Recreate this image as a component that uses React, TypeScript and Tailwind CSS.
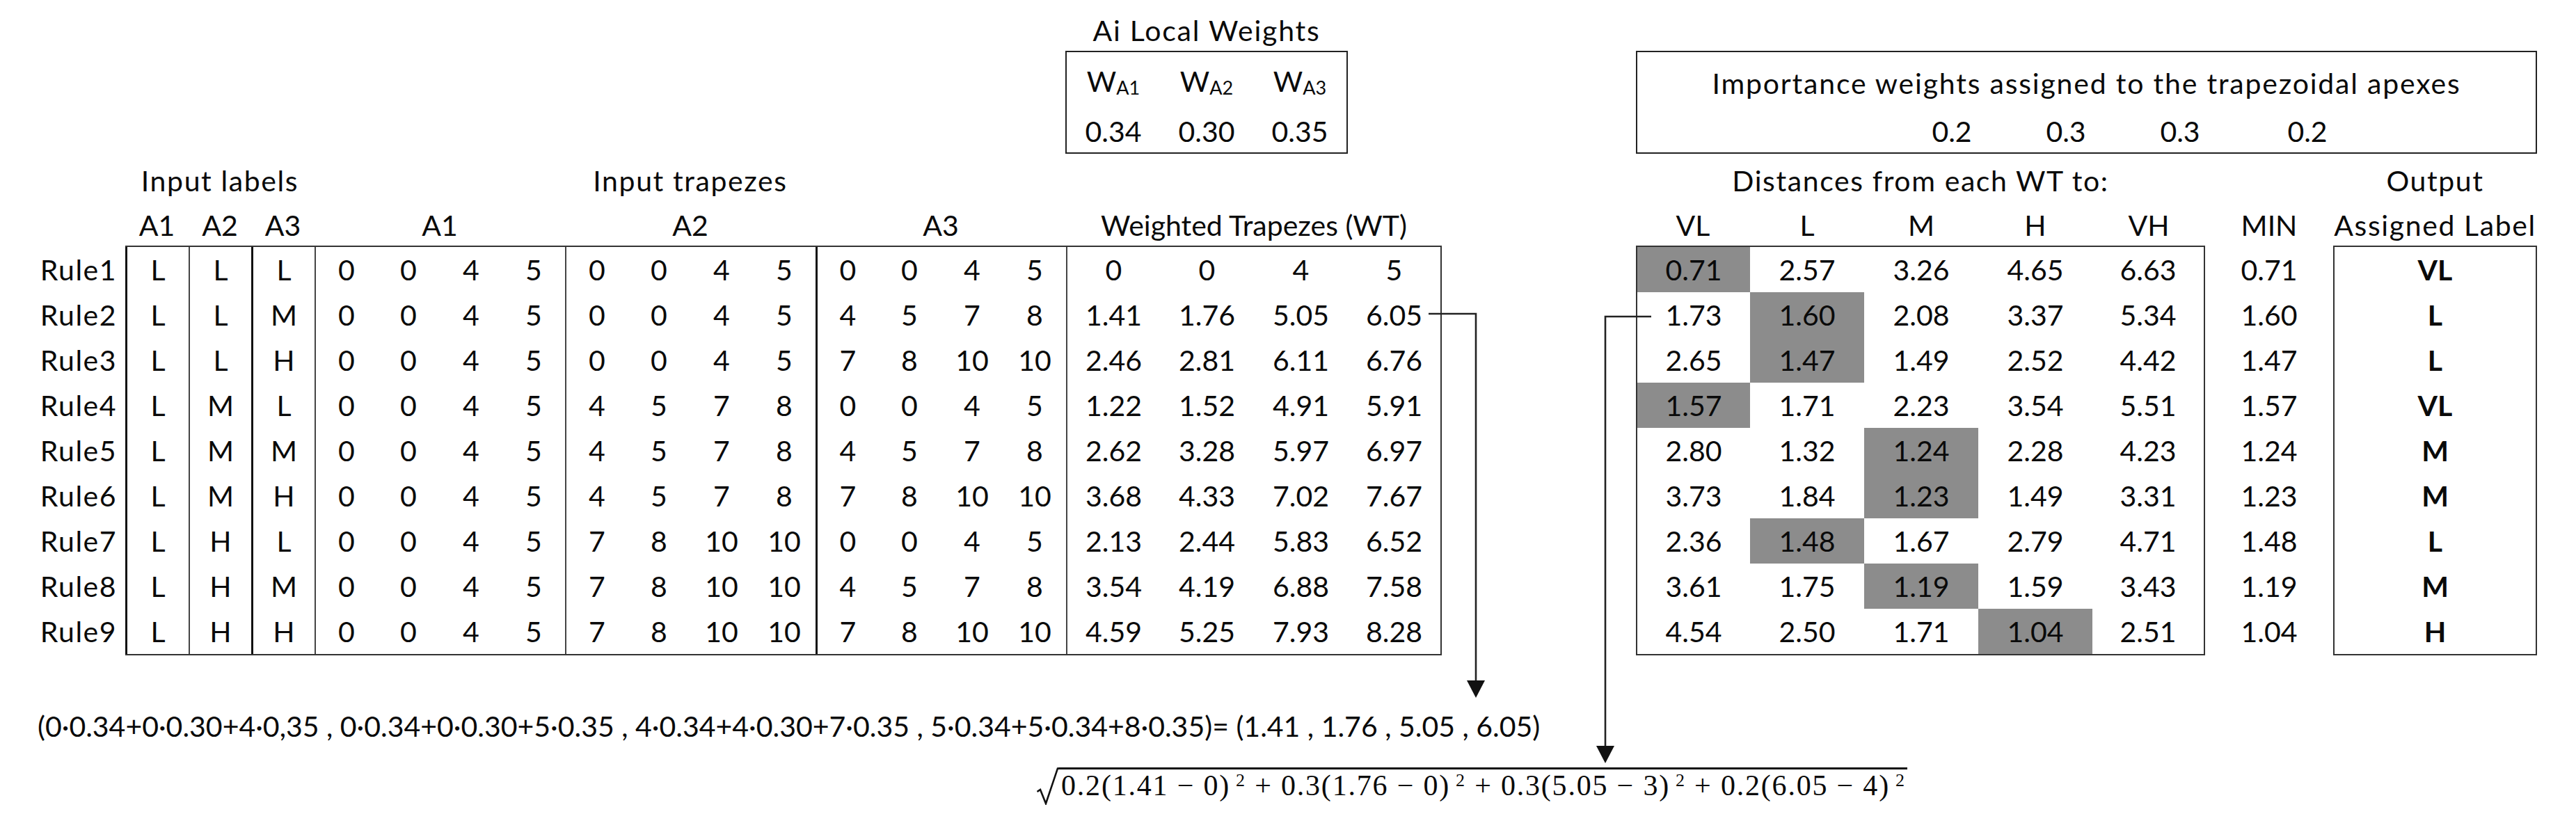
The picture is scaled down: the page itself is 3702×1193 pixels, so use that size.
import React from "react";

const leftRows: { name: string; lab: string[]; t: string[][]; wt: string[] }[] = [
  { name: "Rule1", lab: ["L", "L", "L"], t: [["0", "0", "4", "5"], ["0", "0", "4", "5"], ["0", "0", "4", "5"]], wt: ["0", "0", "4", "5"] },
  { name: "Rule2", lab: ["L", "L", "M"], t: [["0", "0", "4", "5"], ["0", "0", "4", "5"], ["4", "5", "7", "8"]], wt: ["1.41", "1.76", "5.05", "6.05"] },
  { name: "Rule3", lab: ["L", "L", "H"], t: [["0", "0", "4", "5"], ["0", "0", "4", "5"], ["7", "8", "10", "10"]], wt: ["2.46", "2.81", "6.11", "6.76"] },
  { name: "Rule4", lab: ["L", "M", "L"], t: [["0", "0", "4", "5"], ["4", "5", "7", "8"], ["0", "0", "4", "5"]], wt: ["1.22", "1.52", "4.91", "5.91"] },
  { name: "Rule5", lab: ["L", "M", "M"], t: [["0", "0", "4", "5"], ["4", "5", "7", "8"], ["4", "5", "7", "8"]], wt: ["2.62", "3.28", "5.97", "6.97"] },
  { name: "Rule6", lab: ["L", "M", "H"], t: [["0", "0", "4", "5"], ["4", "5", "7", "8"], ["7", "8", "10", "10"]], wt: ["3.68", "4.33", "7.02", "7.67"] },
  { name: "Rule7", lab: ["L", "H", "L"], t: [["0", "0", "4", "5"], ["7", "8", "10", "10"], ["0", "0", "4", "5"]], wt: ["2.13", "2.44", "5.83", "6.52"] },
  { name: "Rule8", lab: ["L", "H", "M"], t: [["0", "0", "4", "5"], ["7", "8", "10", "10"], ["4", "5", "7", "8"]], wt: ["3.54", "4.19", "6.88", "7.58"] },
  { name: "Rule9", lab: ["L", "H", "H"], t: [["0", "0", "4", "5"], ["7", "8", "10", "10"], ["7", "8", "10", "10"]], wt: ["4.59", "5.25", "7.93", "8.28"] },
];

const rightRows: { d: string[]; g: number; min: string; out: string }[] = [
  { d: ["0.71", "2.57", "3.26", "4.65", "6.63"], g: 0, min: "0.71", out: "VL" },
  { d: ["1.73", "1.60", "2.08", "3.37", "5.34"], g: 1, min: "1.60", out: "L" },
  { d: ["2.65", "1.47", "1.49", "2.52", "4.42"], g: 1, min: "1.47", out: "L" },
  { d: ["1.57", "1.71", "2.23", "3.54", "5.51"], g: 0, min: "1.57", out: "VL" },
  { d: ["2.80", "1.32", "1.24", "2.28", "4.23"], g: 2, min: "1.24", out: "M" },
  { d: ["3.73", "1.84", "1.23", "1.49", "3.31"], g: 2, min: "1.23", out: "M" },
  { d: ["2.36", "1.48", "1.67", "2.79", "4.71"], g: 1, min: "1.48", out: "L" },
  { d: ["3.61", "1.75", "1.19", "1.59", "3.43"], g: 2, min: "1.19", out: "M" },
  { d: ["4.54", "2.50", "1.71", "1.04", "2.51"], g: 3, min: "1.04", out: "H" },
];

const labCls = [
  "w-[91px] border-l-[3px] border-[#111]",
  "w-[90px] border-l-2 border-[#444]",
  "w-[91px] border-l-[3px] border-[#111]",
];
const grpFirst = [
  "border-l-2 border-[#444]",
  "border-l-2 border-[#444]",
  "border-l-[3px] border-[#111]",
];
const rCls = [
  "w-[164px] border-l-2 border-[#333]",
  "w-[164px]",
  "w-[164px]",
  "w-[164px]",
  "w-[162px] border-r-2 border-[#333]",
];

const cell = "flex h-full shrink-0 items-center justify-center";

export default function App() {
  return (
    <div className="relative h-[1193px] w-[3702px] overflow-hidden bg-white font-['Lato',sans-serif] text-[41px] leading-[1.2] text-[#0a0a0a]">
      {/* Row A: weight boxes */}
      <div className="flex h-[221px]">
        <div className="w-[1531px] shrink-0" />
        <div className="flex w-[406px] shrink-0 flex-col">
          <div className="h-[73px] pt-[19px] text-center leading-[50px] tracking-[1.8px]">Ai Local Weights</div>
          <div className="flex h-[148px] flex-col border-2 border-[#222]">
            <div className="mt-[17px] flex h-[50px]">
              {["A1", "A2", "A3"].map((s) => (
                <div key={s} className="flex w-[134px] items-center justify-center leading-[50px]">
                  W<sub className="-bottom-[9px] text-[27px]">{s}</sub>
                </div>
              ))}
            </div>
            <div className="mt-[22px] flex h-[50px]">
              {["0.34", "0.30", "0.35"].map((s) => (
                <div key={s} className="flex w-[134px] items-center justify-center leading-[50px]">
                  {s}
                </div>
              ))}
            </div>
          </div>
        </div>
        <div className="w-[414px] shrink-0" />
        <div className="flex w-[1295px] shrink-0 flex-col">
          <div className="h-[73px]" />
          <div className="flex h-[148px] flex-col border-2 border-[#222]">
            <div className="mt-[20px] h-[50px] text-center leading-[50px] tracking-[1.8px]">
              Importance weights assigned to the trapezoidal apexes
            </div>
            <div className="mt-[19px] flex h-[50px] pl-[370px] leading-[50px]">
              <div className="w-[164px] text-center">0.2</div>
              <div className="w-[164px] text-center">0.3</div>
              <div className="w-[164px] text-center">0.3</div>
              <div className="ml-[19px] w-[164px] text-center">0.2</div>
            </div>
          </div>
        </div>
      </div>

      {/* Row B: group headers */}
      <div className="flex h-[78px] pt-[14px] leading-[50px] tracking-[1.6px]">
        <div className="w-[180px] shrink-0" />
        <div className="w-[272px] shrink-0 text-center">Input labels</div>
        <div className="w-[1080px] shrink-0 text-center">Input trapezes</div>
        <div className="w-[540px] shrink-0" />
        <div className="w-[279px] shrink-0" />
        <div className="w-[818px] shrink-0 text-center">Distances from each WT to:</div>
        <div className="w-[184px] shrink-0" />
        <div className="w-[293px] shrink-0 text-center">Output</div>
      </div>

      {/* Row C: column headers */}
      <div className="flex h-[54px] items-center pb-[4px]">
        <div className="w-[180px] shrink-0" />
        <div className="w-[91px] shrink-0 text-center">A1</div>
        <div className="w-[90px] shrink-0 text-center">A2</div>
        <div className="w-[91px] shrink-0 text-center">A3</div>
        <div className="w-[360px] shrink-0 text-center">A1</div>
        <div className="w-[360px] shrink-0 text-center">A2</div>
        <div className="w-[360px] shrink-0 text-center">A3</div>
        <div className="w-[540px] shrink-0 text-center">Weighted Trapezes (WT)</div>
        <div className="w-[279px] shrink-0" />
        <div className="w-[164px] shrink-0 text-center">VL</div>
        <div className="w-[164px] shrink-0 text-center">L</div>
        <div className="w-[164px] shrink-0 text-center">M</div>
        <div className="w-[164px] shrink-0 text-center">H</div>
        <div className="w-[162px] shrink-0 text-center">VH</div>
        <div className="w-[184px] shrink-0 text-center">MIN</div>
        <div className="w-[293px] shrink-0 text-center tracking-[1.6px]">Assigned Label</div>
      </div>

      {/* Row D: tables */}
      <div className="flex">
        <div className="flex w-[180px] shrink-0 flex-col pt-[2px]">
          {leftRows.map((r) => (
            <div key={r.name} className="flex h-[65px] items-center justify-end pr-[12px] tracking-[1.5px]">
              {r.name}
            </div>
          ))}
        </div>
        <div className="flex w-[1892px] shrink-0 flex-col border-y-2 border-[#333]">
          {leftRows.map((r) => (
            <div key={r.name} className="flex h-[65px]">
              {r.lab.map((l, i) => (
                <div key={i} className={`${cell} ${labCls[i]}`}>
                  {l}
                </div>
              ))}
              {r.t.map((g, gi) =>
                g.map((v, vi) => (
                  <div key={`${gi}-${vi}`} className={`${cell} w-[90px] ${vi === 0 ? grpFirst[gi] : ""}`}>
                    {v}
                  </div>
                ))
              )}
              {r.wt.map((v, i) => (
                <div
                  key={i}
                  className={`${cell} w-[135px] ${i === 0 ? "border-l-2 border-[#444]" : ""} ${i === 3 ? "border-r-2 border-[#333]" : ""}`}
                >
                  {v}
                </div>
              ))}
            </div>
          ))}
        </div>
        <div className="w-[279px] shrink-0" />
        <div className="flex w-[818px] shrink-0 flex-col border-y-2 border-[#333]">
          {rightRows.map((r, ri) => (
            <div key={ri} className="flex h-[65px]">
              {r.d.map((v, i) => (
                <div key={i} className={`${cell} ${rCls[i]} ${r.g === i ? "bg-[#8c8c8c]" : ""}`}>
                  {v}
                </div>
              ))}
            </div>
          ))}
        </div>
        <div className="flex w-[184px] shrink-0 flex-col pt-[2px]">
          {rightRows.map((r, ri) => (
            <div key={ri} className="flex h-[65px] items-center justify-center">
              {r.min}
            </div>
          ))}
        </div>
        <div className="flex w-[293px] shrink-0 flex-col border-2 border-[#333]">
          {rightRows.map((r, ri) => (
            <div key={ri} className="flex h-[65px] items-center justify-center font-bold">
              {r.out}
            </div>
          ))}
        </div>
      </div>

      {/* Row E: weighted trapeze formula */}
      <div className="mt-[77px] whitespace-nowrap pl-[54px] leading-[50px]">
        (0·0.34+0·0.30+4·0,35 , 0·0.34+0·0.30+5·0.35 , 4·0.34+4·0.30+7·0.35 , 5·0.34+5·0.34+8·0.35)= (1.41 , 1.76 , 5.05 , 6.05)
      </div>

      {/* Row F: distance formula */}
      <div className="mt-[34px] flex pl-[1490px]">
        <svg width="31" height="54" viewBox="0 0 31 54" className="shrink-0">
          <path d="M0.5 35 L5 32 L13 52 L30 1.5 L31 1.5" fill="none" stroke="#111" strokeWidth="2.6" strokeLinejoin="miter" />
        </svg>
        <div className="whitespace-nowrap border-t-[3px] border-[#111] pl-[4px] pr-[2px] font-['Liberation_Serif',serif] text-[42px] leading-[46px] tracking-[1.8px]">
          0.2(1.41 − 0)<sup className="ml-[8px] text-[26px]">2</sup> + 0.3(1.76 − 0)<sup className="ml-[8px] text-[26px]">2</sup> + 0.3(5.05 − 3)
          <sup className="ml-[8px] text-[26px]">2</sup> + 0.2(6.05 − 4)<sup className="ml-[8px] text-[26px]">2</sup>
        </div>
      </div>

      {/* Connector arrows */}
      <svg className="pointer-events-none absolute left-0 top-0" width="3702" height="1193" viewBox="0 0 3702 1193">
        <path d="M2053 451 H2121 V982" fill="none" stroke="#222" strokeWidth="2.6" />
        <polygon points="2108,978 2134,978 2121,1003" fill="#111" />
        <path d="M2373 455 H2307 V1076" fill="none" stroke="#222" strokeWidth="2.6" />
        <polygon points="2294,1072 2320,1072 2307,1097" fill="#111" />
      </svg>
    </div>
  );
}
